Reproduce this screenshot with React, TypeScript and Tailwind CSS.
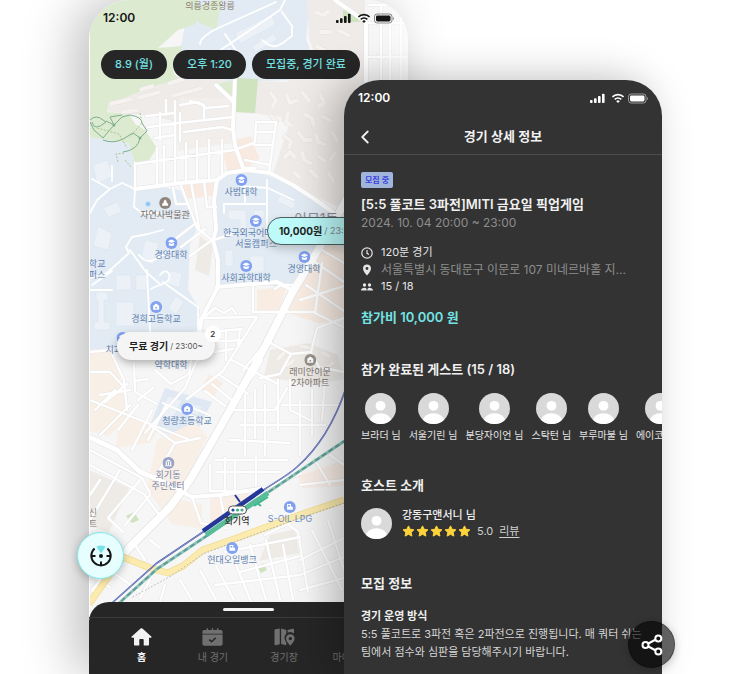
import React from "react";
import { ChevronLeft } from "lucide-react";

const FONT = "font-['Inter','Noto_Sans_CJK_KR',sans-serif]";

/* ---------- Icons ---------- */

function StatusIcons() {
  return (
    <svg width="58" height="12" viewBox="0 0 58 12" fill="currentColor" aria-hidden="true">
      <rect x="0" y="8" width="2.6" height="3" rx="0.8" />
      <rect x="4" y="6.300" width="2.6" height="4.7" rx="0.8" />
      <rect x="8" y="4.100" width="2.6" height="6.9" rx="0.8" />
      <rect x="12" y="1.700" width="2.6" height="9.3" rx="0.8" />
      <g fill="none" stroke="currentColor" strokeWidth="1.6">
        <path d="M22.4 4.9a8 8 0 0 1 11.2 0" />
        <path d="M24.7 7.4a4.8 4.8 0 0 1 6.6 0" />
      </g>
      <path d="M26.2 9.2a2.6 2.6 0 0 1 3.6 0L28 11.1z" />
      <rect x="38.5" y="2" width="17.5" height="9" rx="2.6" fill="none" stroke="currentColor" strokeOpacity="0.5" />
      <rect x="40" y="3.500" width="14.5" height="6" rx="1.4" />
      <path d="M57 4.900v3.2c.6-.3 1-.9 1-1.6s-.4-1.300-1-1.600z" opacity="0.5" />
    </svg>
  );
}

function HomeIcon() {
  return (
    <svg width="21" height="18" viewBox="0 0 21 18" fill="currentColor" aria-hidden="true">
      <path d="M9.600.6a1.300 1.300 0 0 1 1.800 0l8.900 7.900c.6.5.3 1.300-.5 1.300H18v6.700c0 .6-.4 1-1 1h-4.300v-5.300c0-.7-.4-1.100-1-1.100H9.300c-.6 0-1 .4-1 1.100v5.300H4c-.6 0-1-.4-1-1V9.800H1.200C.4 9.800.1 9 .7 8.500z" />
    </svg>
  );
}

function CalendarIcon() {
  return (
    <svg width="21" height="18" viewBox="0 0 21 18" aria-hidden="true">
      <path fill="currentColor" d="M2.200 2h2.400V.3h1.500V2h3.700V.3h1.400V2h3.700V.3h1.500V2h2.400c1 0 1.800.8 1.800 1.700v2H.4v-2C.4 2.800 1.200 2 2.200 2zM.4 6.500h20.200V16c0 1-.8 1.700-1.800 1.700H2.200c-1 0-1.800-.8-1.800-1.700z" />
      <path d="M7.300 11.600l2.400 2.200 4-4" fill="none" stroke="#262626" strokeWidth="1.500" />
    </svg>
  );
}

function CourtIcon() {
  return (
    <svg width="21" height="18" viewBox="0 0 21 18" aria-hidden="true">
      <path fill="currentColor" d="M.5 2.300c0-.6.5-1 1-1l4.300-.9v15.800l-4.200 1c-.6.1-1.100-.3-1.100-.9zM7.100.6l5.200 1.500v3.700a6 6 0 0 0-.9 7.200l.9 1.600v2.700l-5.200-1.300zM13.600 2l5-1.300c.8-.2 1.400.2 1.400.9v4a5.800 5.800 0 0 0-6.400-.8z" />
      <path fill="currentColor" fillRule="evenodd" d="M16.300 6.300c2.500 0 4.300 1.900 4.300 4.200 0 2.700-2.400 5-4.300 7.200-1.900-2.200-4.300-4.500-4.300-7.200 0-2.300 1.800-4.200 4.300-4.200zm0 2.600a1.700 1.700 0 1 0 0 3.400 1.700 1.700 0 0 0 0-3.400z" />
    </svg>
  );
}

function PersonIcon() {
  return (
    <svg width="21" height="18" viewBox="0 0 21 18" fill="currentColor" aria-hidden="true">
      <circle cx="10.500" cy="4.500" r="4" />
      <path d="M2.500 17.500c0-5 3.500-7.500 8-7.500s8 2.500 8 7.500z" />
    </svg>
  );
}

function LocateIcon() {
  return (
    <svg width="30" height="30" viewBox="0 0 30 30" fill="none" aria-hidden="true">
      <path d="M15 12.500L10.400 5.700a9.500 9.500 0 0 1 9.200 0z" fill="#73e3e8" />
      <g stroke="#161616" strokeWidth="2">
        <path d="M8.600 7.400a9.700 9.700 0 1 0 12.800 0" />
        <path d="M5.300 15h4.200M20.500 15h4.200M15 24.700v-4.200" />
      </g>
      <circle cx="15" cy="15" r="2" fill="#161616" />
    </svg>
  );
}

function ShareIcon() {
  return (
    <svg width="22" height="22" viewBox="0 0 22 22" fill="none" stroke="#fff" strokeWidth="2" aria-hidden="true">
      <path d="M7.300 9.500l7.500-4M7.300 12.500l7.500 4" />
      <circle cx="4.500" cy="11" r="3" />
      <circle cx="17.300" cy="4.400" r="3" />
      <circle cx="17.300" cy="17.600" r="3" />
    </svg>
  );
}

function ClockIcon() {
  return (
    <svg width="12" height="12" viewBox="0 0 12 12" fill="none" stroke="#e5e5e5" strokeWidth="1.200" aria-hidden="true">
      <circle cx="6" cy="6" r="5.200" />
      <path d="M6 3v3.300l2 1.200" />
    </svg>
  );
}

function PlaceIcon() {
  return (
    <svg width="12" height="12" viewBox="0 0 12 12" fill="#e5e5e5" aria-hidden="true">
      <path fillRule="evenodd" d="M6 .5c2.300 0 4 1.700 4 3.900C10 7.200 7.600 9.500 6 11.500 4.400 9.500 2 7.200 2 4.400 2 2.200 3.700.5 6 .5zm0 2.600a1.400 1.400 0 1 0 0 2.800 1.400 1.400 0 0 0 0-2.800z" />
    </svg>
  );
}

function PeopleIcon() {
  return (
    <svg width="12" height="12" viewBox="0 0 12 12" fill="#e5e5e5" aria-hidden="true">
      <circle cx="3.500" cy="4" r="1.700" />
      <circle cx="8.500" cy="4" r="1.700" />
      <path d="M0 9.500C0 7.600 1.600 6.700 3.500 6.700S5.700 7.600 5.700 9.500zM6.300 9.500c0-1.900.6-2.800 2.200-2.800S12 7.600 12 9.500z" />
    </svg>
  );
}

function Avatar() {
  return (
    <svg width="31" height="31" viewBox="0 0 31 31" className="shrink-0 rounded-full bg-[#d9d9d9]" fill="#fff" aria-hidden="true">
      <circle cx="15.500" cy="12.800" r="4.900" />
      <ellipse cx="15.500" cy="27.500" rx="10.500" ry="7.200" />
    </svg>
  );
}

function Star() {
  return (
    <svg width="13" height="12" viewBox="0 0 13 12" aria-hidden="true">
      <path
        d="M6.500.9l1.700 3.400 3.700.5-2.700 2.600.7 3.700-3.400-1.800-3.400 1.800.7-3.700L1.100 4.800l3.700-.5z"
        fill="#ffd43b"
        stroke="#ffd43b"
        strokeWidth="1"
        strokeLinejoin="round"
      />
    </svg>
  );
}

/* ---------- Map ---------- */

const minorRoads = [
  "M146 116l29-3M148 127l27-3M155 138l20-3M160 113v27M175 101v46M166 100v15",
  "M160 125l73-8M180 105l18-3 8 6 22-2M180 113v28M184 132l38-5 10 3M190 101l14 4v14",
  "M135 164l42-6 57-8 20-7M135 163v26M157 148v38M164 146v38M175 146v37M186 143v39M197 141v39M209 140v39M222 140v34",
  "M256 122h20l-7 50M256 122l-1 20M256 132h18M254 145h18M245 160l25 5M243 168h12",
  "M180 183l17 45 15 12M191 182l8 45M204 181l3 26h9M173 188l3 16h10",
  "M196 223l-22 17M205 229l-24 18M212 240l-22 16M213 240l20-6",
  "M253 287v25h60l30 15M203 318l54-1M208 332l34-3M207 342l36-2M208 353l25-4M203 318l12-10 9 5 8-5 4 6",
  "M257 317l-34 54-36 28M240 329l-2 16M226 330v30M200 320l-3 40-12 28-40 45",
  "M275 289l6-4h14M243 370l30-35M230 359l46 24M218 374l30 20M212 384l22 18M205 391l20 15",
  "M262 360l-8 15-12 12M265 340l26 14 20-2 8 15 25 5M291 354l-11 20-20 4M311 352l6-24 27-10",
  "M300 300l44-14M306 285l38 26M315 262l29 20M322 250l22 13M315 313l7-50",
  "M90 352l20-2 14 30 3 30M90 372h20l15 16M100 395l30-5M95 410l20-20",
  "M134 362l1 30 22 12M134 381l14-2M155 370l16 14 18-10 2-14M138 400l15-12",
  "M90 400l35 14 35 14M105 402l22-18M118 430l20-25M132 450l20-40M148 440l18-35M100 435l30-30",
  "M150 425l25 18 25-5M163 403l45 20M175 443l-20 35-22-12M190 440l-30-12M185 405l25 10",
  "M235 410h40l12-22M240 425h46M245 395v60M255 390v48M265 385v70M278 380v50M290 380v30l20 10M230 440l60 3M215 460h72M215 472h65M225 458v36M210 465v26h48M235 460v30M256 455v30M300 400v55M312 390v45M325 380l-3 40M282 405h58M285 425h40",
  "M90 450l52 28 8 15M90 465l54 29 16 22M100 480l-10 15M120 470l-30 50M140 480l-32 38 15 14M150 495l-25 30M160 516l-18 20",
  "M192 497l9 26 25 5M220 495l4 20M270 510l28 22 10 60M265 535l30-15M300 485l44-5M315 460l15 25M330 455l14 10",
  "M200 570l16 30M216 566l18 34M235 562l16 40M250 545l16 55M266 540l14 60M283 545l10 55M300 560l44-22M300 575l44-18M300 590l44-12M240 572l60-16M215 585l85-10M312 530l30 60M328 520l16 50M180 580l12 20M225 552l75-15",
  "M135 545l10 15M150 540l10 8M90 575l20 12M110 570l30 22M150 580l-10 18M165 585l-5 17",
  "M369 23h38M369 57h38M369 5h38M381 5v75M390 23v57M401 0v80",
];

const midRoads = [
  "M235 78l-2 50 2 17 8 23M216 85l18 17",
  "M135 189l45-6 37-3 10-7 20-3 23 3 23 12 20 13 20 14",
  "M217 180l-3 20 2 30-3 10 5 20v27l-17 33-3 40",
  "M217 287l60-5 15 8",
  "M160 480l32 17 28-2 45-7 35-15",
  "M335 0l31 22v60",
];

const campusPaths = [
  "M178 62c-6 8-4 15 4 14l98-66M200 44c0-6 8-10 14-14l62-28M225 34l12 18M262 40c10 8 14 8 22 2l8-6v-10l-10-14M280 10l5-10",
  "M90 213l7-13 13-11 12-6 13 6-1 18 8 6h16M112 166v15M110 189l-18-10",
  "M163 230l-15 4-16 3-6 10 3 6-22 20-17 5M130 250l16 22 14 12M139 255c6 8 12 8 20 2l12-6",
  "M147 270l3 62-8 10M160 275c8-10 14 4 5 8s-12 4-14 6M163 282l35 25v32M90 290h22M92 285l20-14",
  "M224 213v-9h43v42M240 186l28 2 25 12M245 186v18M267 180v24",
];

const buildings = [
  "M315 12l8 3 6-4M320 32h12M338 30l12 6M316 46l12 6M336 50l14 6M318 64l12 6M340 66l12 6",
  "M270 92l6 8-4 8M286 94l4 9 8-3M302 92l8 10M320 94l4 9-6 4M270 115l8 8M288 112l-2 10 6 4M304 114l8 4 2 8M322 116l10 6",
  "M283 135l8 6-2 8M298 132l6 8 8 0M316 134l2 8 8 3M332 132l6 10M284 158l6-6 6 6M302 152l2 8 8 4M318 156l8 6M336 152l-6 8M294 172l6 6M310 170l8 8M328 172l6 10",
  "M110 104l22-5M138 98l22-6M122 112l16-2M140 90l14-4M168 84l16-5M188 92l14-4M172 96l18-5",
  "M277 360l8-8M286 366l8-6M300 346l10 2M322 352l8 5M326 368l8-6",
];

const campusBuildings = [
  "M93 165l14-5 6 16-16 8zM103 208l14-6 5 10-14 5zM98 226l14 8-4 16-15-4z",
  "M96 292h12v8h-4v22h6v8h-16v-8h4v-22h-2zM116 275h15v15h-15zM136 275h12v15h-12zM116 302h18v24h-18zM170 270l12 4-3 14-12-5zM176 296l8 6-8 12-8-6z",
  "M228 210h18v22h-6v-12h-12zM250 256h14v16h-14zM254 210h10v8h-10zM280 195l16 8-3 6-16-8zM225 250h8v16h-8zM145 240l14 3-6 22-12-6z",
  "M235 33l36-18 5 9-36 20zM252 46l22-12 3 6-22 12zM200 62l12-6 4 6-12 6zM220 52l10-5 3 5-10 5z",
  "M168 396l14 4-10 20-12-5zM188 402l14 5-4 8-14-5z",
];

const mainRoad = "M350 193l-30 54-28 46-25 50-37 67-17 30-23 40-20 27-40 40-35 43";
const westRoad = "M89 437l28 13 23 22 20 8";
const trunkRoad = "M344 500l-47 16-60 22-34 12-20 16-15 7-18-5-27-11-34 12";
const trunkBranch = "M120 560l-31 44";
const blueLine = "M346 388c-10 30-25 58-49 79-10 9-20 14-32 22l-62 43-46 31-45 40";
const greenLine = "M346 440l-79 53-62 44-48 32-40 36";

function MapCanvas() {
  return (
    <svg className="absolute inset-x-0 top-0 w-full" viewBox="89 0 319 700" fill="none" aria-hidden="true">
      <rect x="89" width="319" height="700" fill="#f6f6f7" />

      {/* campus, residential and commercial zones */}
      <g>
        <path d="M190 0h120l-4 40 8 18-24 22-90 4-35 12 15-45z" fill="#e2ebf4" />
        <path d="M89 0h109l-2 24-18 6-20 18 24-2-5 34-37 17-31 7-2 8 22 2 6 10 10 6 12 18-8 12-20 4-12-9-28-1z" fill="#dcebd0" />
        <path d="M215 0h7l-6 30-18-8-8-12z" fill="#dcebd0" />
        <path d="M108 104l52-20 65-8 8 40-50 8-30-8-45-4z" fill="#efebe8" />
        <path d="M176 115l56-8v36l-54 8zM180 98h50v15l-50 4z" fill="#f1eeec" />
        <path d="M307 0h58v200l-20 10-48-22-24-14 16-50-28-10-24-1V80l50 2 28-26-6-18z" fill="#efebe8" />
        <path d="M236 112l46 5-10 55-28-4-8-24z" fill="#f6f6f7" />
        <path d="M236 78l22 1-3 34-20-1zM343 10l18 4v8h-18z" fill="#cfe3bf" />
        <path d="M217 84l17-4-1 20z" fill="#dcebd0" />
        <path d="M89 137l40 6 6 20v26l25-2 20 3 17 38-7 17-2 45 12 20-2 20-28 10-55 8-26 2z" fill="#e2ebf4" />
        <path d="M217 182l10-9 33-1 40 18 40 25-30 55-20 20-30-7-42 4-5-47z" fill="#e2ebf4" />
        <path d="M165 388l47 14-22 43-40-20z" fill="#e0e9f3" />
        <path d="M182 181l33-3-2 18-28 3zM235 140l16-4 3 10 6 12-10 8-6 2zM222 152l12 0 8 16-14 4z" fill="#f8eae0" />
        <path d="M322 240l22 10v70l-26 3-30-10 4-20zM257 290l30-4-8 26-22-1zM209 374l14 9-10 15-12-9z" fill="#f8ece3" />
        <path d="M89 350l22 2 12 34 6 30-20 20-20-5zM157 440l38-18 12 15-30 62 25 5v25l-30-5-25-35zM120 410l40 18-10 15-34 5z" fill="#f8efe7" />
        <path d="M298 476l46-16v26l-42 2zM210 495l40-3-10 20-30 14z" fill="#f9eee6" />
        <path d="M270 350l38-7 30 12 6 24-30 6-50-8zM89 470l40 18-20 44-20-6zM270 535l25-6 4 24-40 8zM200 236l13 10-4 30-14-6z" fill="#eeebe7" />
        <path d="M126 516l8-4 5 8-7 3zM258 568l5-5 4 7-6 3z" fill="#cfe3bf" />
      </g>

      <g fill="#ebf1f7" stroke="#d9e3ed" strokeWidth="0.5">
        {campusBuildings.map((d) => (
          <path key={d} d={d} />
        ))}
      </g>
      <g stroke="#e5e0dd" strokeWidth="5" strokeLinejoin="round">
        {buildings.map((d) => (
          <path key={d} d={d} />
        ))}
      </g>
      <g stroke="#f5f2f0" strokeWidth="4" strokeLinejoin="round">
        {buildings.map((d) => (
          <path key={d} d={d} />
        ))}
      </g>

      {/* road casings first, then the road surfaces on top */}
      <g stroke="#e3e3e5" strokeLinejoin="round" strokeLinecap="round">
        {minorRoads.map((d) => (
          <path key={d} d={d} strokeWidth="3.400" strokeOpacity="0.800" />
        ))}
        {midRoads.map((d) => (
          <path key={d} d={d} strokeWidth="5" />
        ))}
        <path d={mainRoad} strokeWidth="9" />
        <path d={westRoad} strokeWidth="6" />
      </g>
      <g stroke="#fff" strokeLinejoin="round" strokeLinecap="round">
        {minorRoads.map((d) => (
          <path key={d} d={d} strokeWidth="2.400" />
        ))}
        {campusPaths.map((d) => (
          <path key={d} d={d} strokeWidth="1.800" />
        ))}
        {midRoads.map((d) => (
          <path key={d} d={d} strokeWidth="4" />
        ))}
        <path d={mainRoad} strokeWidth="7.500" />
        <path d={westRoad} strokeWidth="5" />
      </g>

      {/* park trails */}
      <g stroke="#7fae8c" strokeWidth="1" strokeLinejoin="round">
        <path d="M90 120q6-6 13 0l3 2q-12 10-14 0M106 121l8 4 8-8 8-2q12 2 12 8l5 8-7 7M103 138l11-13M103 138l-9-8-4-8M103 140q10 4 20-1l10-6 7 5M140 138q-2 12-17 14M114 125l-4-8 12-2" />
        <path d="M140 113l2 10-12 14M97 128l22 6 8 14M124 153l-8 1 2 8M125 160l7 8" stroke="#a5c88a" strokeDasharray="2 1.500" />
      </g>
      <circle cx="114" cy="125" r="1.500" fill="#7fae8c" />
      <circle cx="140" cy="138" r="1.500" fill="#7fae8c" />
      <circle cx="148" cy="204" r="2.500" fill="#8cc4f4" stroke="#c9e3fa" />

      {/* trunk road */}
      <g strokeLinejoin="round">
        <path d={trunkRoad} stroke="#f0dc93" strokeWidth="7" />
        <path d={trunkBranch} stroke="#f0dc93" strokeWidth="7" />
        <path d={trunkRoad} stroke="#fcebae" strokeWidth="5.500" />
        <path d={trunkBranch} stroke="#fcebae" strokeWidth="5.500" />
        <path d="M344 503l-47 16-60 22-34 13-32 22-40 22" stroke="#b4b4ba" strokeWidth="1" strokeDasharray="1.500 2" />
      </g>

      {/* rail lines and station platforms */}
      <path d={blueLine} stroke="#4657a8" strokeWidth="1.600" />
      <path d={blueLine} stroke="#c9cfe8" strokeWidth="0.500" />
      <path d={greenLine} stroke="#8fc4b8" strokeWidth="3" />
      <path d={greenLine} stroke="#5f9d98" strokeWidth="2" strokeDasharray="5 3" />
      <path d="M206 535l62-42" stroke="#58bd98" strokeWidth="5" />
      <path d="M254 506l14-9M257 503l4 3" stroke="#3fb98c" strokeWidth="2" />
      <path d="M203 531l60-42" stroke="#24389a" strokeWidth="4.500" />
      <path d="M240 502l-5-7" stroke="#24389a" strokeWidth="2" />
      <rect x="228.500" y="506" width="18" height="8" rx="4" fill="#fff" stroke="#555" />
      <circle cx="233" cy="510" r="1.600" fill="#2b479f" />
      <circle cx="237.500" cy="510" r="1.600" fill="#35b57c" />
      <circle cx="242" cy="510" r="1.600" fill="#58a98b" />
    </svg>
  );
}

type Kind = "school" | "museum" | "campus" | "house" | "office" | "gas" | "none";

const kindColor: Record<Kind, string> = {
  school: "#82a2f0",
  campus: "#82a2f0",
  museum: "#8f847b",
  house: "#9a928c",
  office: "#9aa2c6",
  gas: "#82a2f0",
  none: "#000",
};

function PinIcon({ kind }: { kind: Kind }) {
  return (
    <svg width="12" height="12" viewBox="0 0 12 12" aria-hidden="true">
      <circle cx="6" cy="6" r="6" fill={kindColor[kind]} />
      {kind === "school" && <path d="M6 2.600l3.800 1.700L6 6 2.200 4.300zM3.400 5.800L6 7l2.600-1.200v2.400C7.200 9.300 4.800 9.300 3.400 8.200z" fill="#fff" />}
      {kind === "museum" && <path d="M6 2.400l1.500 1.800v1.600l1.500 1v2H3v-2l1.500-1V4.200z" fill="#fff" />}
      {(kind === "house" || kind === "campus") && <path fillRule="evenodd" d="M6 2.500l3 2.300v4H3v-4zM5.200 6v1.500h1.600V6z" fill="#fff" />}
      {kind === "office" && <path d="M6 2.500l3.300 2H2.700zM3.200 5h1.200v3H3.200zM5.400 5h1.200v3H5.400zM7.600 5h1.200v3H7.600zM2.700 8.300h6.600v.9H2.700z" fill="#fff" />}
      {kind === "gas" && <path fillRule="evenodd" d="M3.300 3h3.900v2.500l1.800.5v2.800H3.300zM4.200 4v1.500h2V4z" fill="#fff" />}
    </svg>
  );
}

const pins: { lines: string[]; kind: Kind; place: string; tone: string }[] = [
  { lines: ["의릉경종왕릉"], kind: "none", place: "left-[121px] top-0", tone: "text-[#8b7f76]" },
  { lines: ["사범대학"], kind: "school", place: "left-[152px] top-[174px]", tone: "text-[#5f7fae]" },
  { lines: ["자연사박물관"], kind: "museum", place: "left-[76px] top-[197px]", tone: "text-[#7a6d64]" },
  { lines: ["한국외국어대학교", "서울캠퍼스"], kind: "school", place: "left-[167px] top-[215px]", tone: "text-[#5f7fae]" },
  { lines: ["경영대학"], kind: "school", place: "left-[82px] top-[237px]", tone: "text-[#5f7fae]" },
  { lines: ["경영대학"], kind: "school", place: "left-[215px] top-[251px]", tone: "text-[#5f7fae]" },
  { lines: ["사회과학대학"], kind: "school", place: "left-[157px] top-[260px]", tone: "text-[#5f7fae]" },
  { lines: ["경희고등학교"], kind: "campus", place: "left-[67px] top-[301px]", tone: "text-[#5f7fae]" },
  { lines: ["치과대학"], kind: "school", place: "left-[33px] top-[332px]", tone: "text-[#5f7fae]" },
  { lines: ["약학대학"], kind: "none", place: "left-[82px] top-[359px]", tone: "text-[#5f7fae]" },
  { lines: ["래미안이문", "2차아파트"], kind: "house", place: "left-[221px] top-[354px]", tone: "text-[#7d746e]" },
  { lines: ["청량초등학교"], kind: "campus", place: "left-[98px] top-[403px]", tone: "text-[#5f7fae]" },
  { lines: ["회기동", "주민센터"], kind: "office", place: "left-[79px] top-[457px]", tone: "text-[#7b84a8]" },
  { lines: ["S-OIL LPG"], kind: "gas", place: "left-[201px] top-[501px]", tone: "text-[#6f8fbf]" },
  { lines: ["현대오일뱅크"], kind: "gas", place: "left-[143px] top-[542px]", tone: "text-[#5f7fae]" },
  { lines: ["회기역"], kind: "none", place: "left-[148px] top-[515px]", tone: "text-[#333] font-medium" },
  { lines: ["대학교", "캠퍼스"], kind: "none", place: "left-[4px] top-[258px]", tone: "text-[#5f7fae]" },
  { lines: ["신", "트"], kind: "none", place: "left-[4px] top-[507px]", tone: "text-[#8b8480]" },
];

function Pin({ pin }: { pin: (typeof pins)[number] }) {
  return (
    <div className={`absolute flex -translate-x-1/2 flex-col items-center whitespace-nowrap text-[9px] leading-[11px] ${pin.place} ${pin.tone}`}>
      {pin.kind !== "none" && <PinIcon kind={pin.kind} />}
      {pin.lines.map((line) => (
        <span key={line}>{line}</span>
      ))}
    </div>
  );
}

/* ---------- Phones ---------- */

const filters = ["8.9 (월)", "오후 1:20", "모집중, 경기 완료"];

const tabs = [
  { label: "홈", icon: <HomeIcon />, active: true },
  { label: "내 경기", icon: <CalendarIcon />, active: false },
  { label: "경기장", icon: <CourtIcon />, active: false },
  { label: "마이페이지", icon: <PersonIcon />, active: false },
];

function MapPhone() {
  return (
    <section className="relative flex w-[319px] shrink-0 flex-col">
      <div className="relative flex flex-1 flex-col overflow-hidden rounded-t-[40px] bg-[#f6f6f7] shadow-[-14px_0_52px_rgba(0,0,0,0.26)]">
        <MapCanvas />
        {pins.map((pin) => (
          <Pin key={pin.place} pin={pin} />
        ))}
        <span className="absolute left-[205px] top-[211px] text-sm leading-4 text-[#8e8e93]">이문1동</span>
        <div className="absolute inset-y-0 right-0 w-8 bg-linear-to-r from-white/0 to-white/60" />
        <div className="absolute inset-y-0 left-0 w-px bg-white" />

        <header className="relative flex h-9 items-center justify-between px-3.5 text-[#161616]">
          <span className="text-xs font-semibold">12:00</span>
          <StatusIcons />
        </header>
        <div className="relative mt-3.5 flex gap-1.5 pl-3">
          {filters.map((label) => (
            <button
              key={label}
              type="button"
              className="h-[29px] whitespace-nowrap rounded-full bg-[#262626] px-3.5 text-[11px] font-medium text-[#73e3e4]"
            >
              {label}
            </button>
          ))}
        </div>

        <button
          type="button"
          className="absolute left-[178px] top-[217px] flex h-7 items-center gap-0.5 whitespace-nowrap rounded-full border border-[#4c5f61] bg-[#bdfafa] px-[11px] shadow-[0_4px_10px_rgba(0,0,0,0.2)]"
        >
          <span className="text-[10px] font-bold text-[#222]">10,000원</span>
          <span className="text-[9px] text-[#7b8b8c]">/ 23:00~</span>
        </button>
        <button
          type="button"
          className="absolute left-[28px] top-[332px] flex h-7 items-center gap-0.5 whitespace-nowrap rounded-full bg-[#f5f5f6] px-3 shadow-[0_3px_9px_rgba(0,0,0,0.3)]"
        >
          <span className="text-[10px] font-bold text-[#222]">무료 경기</span>
          <span className="text-[8px] text-[#555]">/ 23:00~</span>
          <span className="absolute -right-1.5 -top-1.5 flex size-4 items-center justify-center rounded-full bg-white text-[8px] font-semibold text-[#333]">
            2
          </span>
        </button>

        <div className="relative mt-auto rounded-tl-[20px] bg-[#262626]">
          <div className="flex h-4 items-center justify-center border-b border-[#3a3a3a]">
            <span className="h-[3px] w-[51px] rounded-full bg-[#f2f2f2]" />
          </div>
          <nav className="flex h-14 px-[17px]">
            {tabs.map((tab) => (
              <button
                key={tab.label}
                type="button"
                className={`flex flex-1 flex-col items-center gap-[3px] whitespace-nowrap pt-2.5 text-[10px] leading-4 ${
                  tab.active ? "font-semibold text-[#f2f2f2]" : "text-[#707070]"
                }`}
              >
                {tab.icon}
                {tab.label}
              </button>
            ))}
          </nav>
        </div>
      </div>

      <button
        type="button"
        aria-label="내 위치"
        className="absolute bottom-[95px] -left-3 flex size-[47px] items-center justify-center rounded-full border border-[#7eeaea] bg-[#e6fffe] shadow-[0_2px_8px_rgba(0,0,0,0.25)]"
      >
        <LocateIcon />
      </button>
    </section>
  );
}

const guests = ["브라더", "서울기린", "분당자이언", "스탁턴", "부루마불", "에이코비"];

const sectionTitle = "text-[13px] font-semibold leading-5 text-[#f0f0f0]";

function DetailPhone() {
  return (
    <section className="relative -ml-16 mt-20 w-[318px] shrink-0">
      <article className="h-full overflow-hidden rounded-t-[36px] bg-[#333] shadow-[-12px_0_40px_rgba(0,0,0,0.28)]">
        <div className="flex h-9 items-center justify-between px-3.5 text-white">
          <span className="text-xs font-semibold">12:00</span>
          <StatusIcons />
        </div>
        <header className="relative flex h-[39px] items-center justify-center border-b border-[#4c4c4c] pt-1">
          <button type="button" aria-label="뒤로" className="absolute left-2.5 text-[#f2f2f2]">
            <ChevronLeft size={22} strokeWidth={2} />
          </button>
          <h1 className="text-[13px] font-semibold text-[#f2f2f2]">경기 상세 정보</h1>
        </header>

        <div className="px-[17px] pb-3 pt-[17px]">
          <span className="flex h-4 w-8 items-center justify-center whitespace-nowrap rounded-xs bg-[#9fb5dc] text-[8px] font-semibold text-[#3a40dc]">
            모집 중
          </span>
          <h2 className="mt-1.5 whitespace-nowrap text-[13px] font-semibold leading-5 text-[#f0f0f0]">
            [5:5 풀코트 3파전]MITI 금요일 픽업게임
          </h2>
          <p className="text-xs leading-[18px] text-[#8d8d8d]">2024. 10. 04 20:00 ~ 23:00</p>

          <ul className="mt-3 text-[11px] leading-[17px] text-[#e5e5e5]">
            <li className="flex items-center gap-2">
              <ClockIcon />
              120분 경기
            </li>
            <li className="flex items-center gap-2 whitespace-nowrap text-xs leading-[17px] text-[#8d8d8d]">
              <PlaceIcon />
              서울특별시 동대문구 이문로 107 미네르바홀 지...
            </li>
            <li className="flex items-center gap-2">
              <PeopleIcon />
              15 / 18
            </li>
          </ul>

          <p className="mt-3 text-[13px] font-semibold leading-5 text-[#73e3e4]">참가비 10,000 원</p>

          <h3 className={`mt-8 ${sectionTitle}`}>참가 완료된 게스트 (15 / 18)</h3>
          <ul className="-mr-[17px] mt-3.5 flex gap-2 overflow-hidden">
            {guests.map((name) => (
              <li key={name} className="flex shrink-0 flex-col items-center gap-[3px] whitespace-nowrap text-[10px] leading-4 text-[#e5e5e5]">
                <Avatar />
                {name} 님
              </li>
            ))}
          </ul>

          <h3 className={`mt-8 ${sectionTitle}`}>호스트 소개</h3>
          <div className="mt-3 flex items-center gap-2.5">
            <Avatar />
            <div>
              <p className="text-[11px] font-medium leading-4 text-[#f0f0f0]">강동구앤서니 님</p>
              <p className="flex items-center text-[11px] leading-4 text-[#d0d0d0]">
                <span className="flex gap-px">
                  {[0, 1, 2, 3, 4].map((n) => (
                    <Star key={n} />
                  ))}
                </span>
                <span className="ml-1.5">5.0</span>
                <a href="#reviews" className="ml-1.5 underline underline-offset-2">
                  리뷰
                </a>
              </p>
            </div>
          </div>

          <h3 className={`mt-[34px] ${sectionTitle}`}>모집 정보</h3>
          <h4 className="mt-3.5 text-[11px] font-semibold leading-[18px] text-[#f0f0f0]">경기 운영 방식</h4>
          <p className="-mr-1 text-[11px] leading-[18px] text-[#d6d6d6]">
            5:5 풀코트로 3파전 혹은 2파전으로 진행됩니다. 매 쿼터 쉬는 팀에서 점수와 심판을 담당해주시기 바랍니다.
          </p>
        </div>
      </article>

      <button
        type="button"
        aria-label="공유"
        className="absolute -right-[13px] bottom-1.5 flex size-[47px] items-center justify-center rounded-full border border-black/30 bg-black/60 shadow-[0_2px_8px_rgba(0,0,0,0.2)]"
      >
        <ShareIcon />
      </button>
    </section>
  );
}

export default function App() {
  return (
    <main className={`flex min-h-screen justify-center overflow-hidden bg-white pl-px ${FONT}`}>
      <MapPhone />
      <DetailPhone />
    </main>
  );
}
